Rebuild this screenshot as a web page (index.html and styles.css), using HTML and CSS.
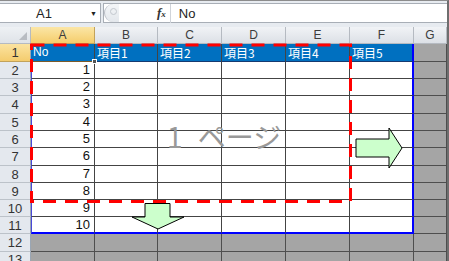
FILE: index.html
```html
<!DOCTYPE html>
<html lang="ja">

<head>
    <meta charset="UTF-8">
    <title>ページ設定</title>
    <link rel="stylesheet" href="styles.css">
</head>

<body>

    <div class="window">
        <div class="formula-bar">
            <div class="name-box">
                <span class="name-text">A1</span>
                <span class="drop">&#9660;</span>
            </div>
            <div class="formula-area">
                <div class="splitter"><span class="dot"></span></div>
                <span class="fx">f<small>x</small></span>
                <span class="formula-text">No</span>
            </div>
        </div>

        <div class="sheet">
            <!-- column headers -->
            <div class="corner"><span class="corner-mark"></span></div>
            <div class="ch sel">A</div>
            <div class="ch">B</div>
            <div class="ch">C</div>
            <div class="ch">D</div>
            <div class="ch">E</div>
            <div class="ch">F</div>
            <div class="ch">G</div>

            <!-- row 1 -->
            <div class="rh sel">1</div>
            <div class="c head active">No<span class="handle"></span></div>
            <div class="c head">項目1</div>
            <div class="c head">項目2</div>
            <div class="c head">項目3</div>
            <div class="c head">項目4</div>
            <div class="c head last">項目5</div>
            <div class="c out"></div>

            <div class="rh">2</div>
            <div class="c num">1</div><div class="c"></div><div class="c"></div><div class="c"></div><div class="c"></div><div class="c last"></div><div class="c out"></div>
            <div class="rh">3</div>
            <div class="c num">2</div><div class="c"></div><div class="c"></div><div class="c"></div><div class="c"></div><div class="c last"></div><div class="c out"></div>
            <div class="rh">4</div>
            <div class="c num">3</div><div class="c"></div><div class="c"></div><div class="c"></div><div class="c"></div><div class="c last"></div><div class="c out"></div>
            <div class="rh">5</div>
            <div class="c num">4</div><div class="c"></div><div class="c"></div><div class="c"></div><div class="c"></div><div class="c last"></div><div class="c out"></div>
            <div class="rh">6</div>
            <div class="c num">5</div><div class="c"></div><div class="c"></div><div class="c"></div><div class="c"></div><div class="c last"></div><div class="c out"></div>
            <div class="rh">7</div>
            <div class="c num">6</div><div class="c"></div><div class="c"></div><div class="c"></div><div class="c"></div><div class="c last"></div><div class="c out"></div>
            <div class="rh">8</div>
            <div class="c num">7</div><div class="c"></div><div class="c"></div><div class="c"></div><div class="c"></div><div class="c last"></div><div class="c out"></div>
            <div class="rh">9</div>
            <div class="c num">8</div><div class="c"></div><div class="c"></div><div class="c"></div><div class="c"></div><div class="c last"></div><div class="c out"></div>
            <div class="rh">10</div>
            <div class="c num">9</div><div class="c"></div><div class="c"></div><div class="c"></div><div class="c"></div><div class="c last"></div><div class="c out"></div>
            <div class="rh">11</div>
            <div class="c num bottom">10</div><div class="c bottom"></div><div class="c bottom"></div><div class="c bottom"></div><div class="c bottom"></div><div class="c last bottom"></div><div class="c out"></div>

            <div class="rh">12</div>
            <div class="c out"></div><div class="c out"></div><div class="c out"></div><div class="c out"></div><div class="c out"></div><div class="c out"></div><div class="c out"></div>
            <div class="rh">13</div>
            <div class="c out"></div><div class="c out"></div><div class="c out"></div><div class="c out"></div><div class="c out"></div><div class="c out"></div><div class="c out"></div>
        </div>

        <!-- page break preview marks drawn over the sheet -->
        <div class="page-label">1 ページ</div>
        <svg class="marks" width="449" height="261" viewBox="0 0 449 261">
            <rect x="31.5" y="44" width="319" height="156.5" fill="none" stroke="#ff0000" stroke-width="3" stroke-dasharray="13 9" />
            <polygon points="356,138 389,138 389,127 402,147 389,167 389,156 356,156" fill="#ccffcc" stroke="#000" stroke-width="1" />
            <polygon points="145,202.5 170,202.5 170,216 184,216 158,228 132,216 145,216" fill="#ccffcc" stroke="#000" stroke-width="1" />
        </svg>
    </div>

</body>

</html>
```

FILE: styles.css
```css
body {
    margin: 0;
    padding: 0;
    font-family: "Liberation Sans", Arial, "Noto Sans CJK JP", sans-serif;
    background-color: #fff;
}

.window {
    position: relative;
    width: 449px;
    height: 261px;
    overflow: hidden;
    box-sizing: border-box;
    border-top: 1px solid #8c8c8c;
    border-right: 2px solid #6e6e6e;
    background-color: #dfe3e8;
}

/* formula bar */
.formula-bar {
    display: flex;
    height: 26px;
    padding: 2px 0 4px 0;
    box-sizing: border-box;
    background-color: #e7ebf0;
}

.name-box {
    display: flex;
    align-items: center;
    width: 101px;
    background-color: #fff;
    border: 1px solid #a8aeb6;
    border-left: none;
    box-sizing: border-box;
}

.name-text {
    font-size: 13px;
    color: #222;
    margin-left: 36px;
    flex: 1;
}

.drop {
    font-size: 7px;
    color: #222;
    margin-right: 3px;
}

.formula-area {
    display: flex;
    align-items: center;
    flex: 1;
    margin-left: 2px;
    background-color: #fff;
    border: 1px solid #a8aeb6;
    border-right: none;
}

.splitter {
    position: relative;
    width: 14px;
    height: 18px;
    border-left: 1px solid #b9bec6;
    border-radius: 9px 0 0 9px;
    background: linear-gradient(#f4f6f8, #e3e7ec);
}

.dot {
    position: absolute;
    left: 5px;
    top: 4px;
    width: 5px;
    height: 5px;
    border: 1px solid #c3c8ce;
    border-radius: 50%;
}

.fx {
    margin-left: 38px;
    padding-right: 4px;
    border-right: 1px solid #d0d4da;
    font-family: "Liberation Serif", "Times New Roman", serif;
    font-style: italic;
    font-weight: bold;
    font-size: 13px;
    line-height: 18px;
    color: #333;
}

.fx small {
    font-size: 9px;
}

.formula-text {
    margin-left: 8px;
    font-size: 13px;
    color: #222;
}

/* sheet grid */
.sheet {
    display: grid;
    grid-template-columns: 31px 64px 63px 64px 64px 64px 64px 1fr;
    grid-template-rows: 17px 18px 17px 17px 18px 17px 17px 18px 17px 17px 17px 17px 18px 1fr;
    height: 235px;
}

.corner {
    position: relative;
    background: linear-gradient(#eef1f4, #dfe3e8);
    border-right: 1px solid #b5bac1;
    border-bottom: 1px solid #b5bac1;
}

.corner-mark {
    position: absolute;
    right: 3px;
    bottom: 3px;
    width: 0;
    height: 0;
    border-left: 8px solid transparent;
    border-bottom: 8px solid #b8bcc2;
}

.ch {
    display: flex;
    align-items: center;
    justify-content: center;
    font-size: 12px;
    color: #3c3c3c;
    background: linear-gradient(#f1f3f6, #dce0e6);
    border-right: 1px solid #b5bac1;
    border-bottom: 1px solid #b5bac1;
}

.ch.sel {
    background: linear-gradient(#fbe6a6, #f5cd6c);
    border-right-color: #c2a25a;
    border-bottom-color: #c2a25a;
}

.rh {
    display: flex;
    align-items: center;
    justify-content: center;
    font-size: 13px;
    color: #333;
    background-color: #e4e8ee;
    border-right: 1px solid #9aa6b4;
    border-bottom: 1px solid #bcc2c9;
}

.rh.sel {
    background: linear-gradient(#fbe3a0, #f4cc6e);
    border-bottom-color: #c2a25a;
}

.c {
    position: relative;
    box-sizing: border-box;
    background-color: #fff;
    border-right: 1px solid #444;
    border-bottom: 1px solid #444;
    font-size: 12px;
    line-height: 16px;
    color: #111;
    white-space: nowrap;
}

.c.head {
    background-color: #0070c0;
    color: #fff;
    padding-left: 2px;
    border-bottom-color: #163a70;
    font-family: "Noto Sans CJK JP", sans-serif;
    font-size: 12px;
    line-height: 17px;
}

.c.head.active {
    border-bottom: 1px solid #7a5a2a;
    font-family: "Liberation Sans", Arial, sans-serif;
}

.handle {
    position: absolute;
    right: -3px;
    bottom: -3px;
    width: 3px;
    height: 3px;
    background-color: #555;
    border: 1px solid #fff;
    z-index: 2;
}

.c.num {
    text-align: right;
    padding-right: 4px;
    font-size: 13px;
    border-left: 1px solid #4848d8;
}

.c.last {
    border-right: 2px solid #0000ff;
}

.c.bottom {
    border-bottom: 2px solid #0000ff;
}

.c.out {
    background-color: #a5a5a5;
    border-right-color: #4e4e4e;
    border-bottom-color: #4e4e4e;
}

/* page break overlays */
.page-label {
    position: absolute;
    left: 167px;
    top: 115px;
    font-family: "Noto Sans CJK JP", sans-serif;
    font-size: 28px;
    font-weight: 400;
    word-spacing: 9px;
    color: #999;
    white-space: nowrap;
}

.marks {
    position: absolute;
    left: 0;
    top: 0;
    pointer-events: none;
}
```
